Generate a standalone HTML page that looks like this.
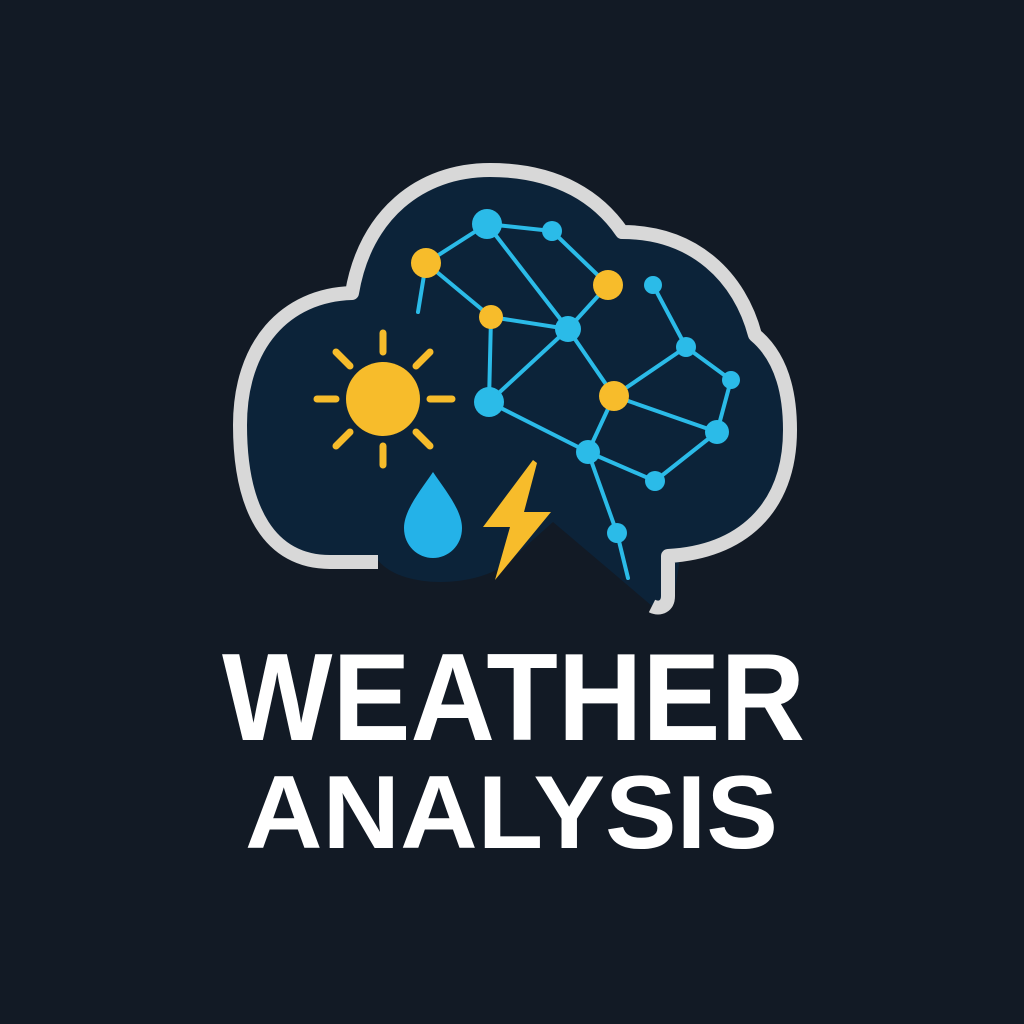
<!DOCTYPE html>
<html><head><meta charset="utf-8"><style>
html,body{margin:0;padding:0;background:#121a25;}
svg{display:block}
</style></head><body>
<svg width="1024" height="1024" viewBox="0 0 1024 1024" xmlns="http://www.w3.org/2000/svg">
<rect width="1024" height="1024" fill="#121a25"/>
<path d="M375,565 L330,565 C270,565 240,510 240,425 C240,345 285,295 352,293 C365,215 420,170 490,170 C560,170 600,200 622,232 C695,232 740,278 755,335 C785,360 790,400 790,430 C790,510 740,552 680,558 L674,598 C672,610 662,612 652,606 L553,522 L515,556 C485,590 400,590 378,560 Z" fill="#0c2339"/>
<path d="M378,562 L330,562 C270,562 240,510 240,425 C240,345 285,295 352,293 C365,215 420,170 490,170 C560,170 600,200 622,232 C695,232 740,278 755,335 C785,360 790,400 790,430 C790,510 740,552 668,556 L668,596 C668,606 660,610 652,606" fill="none" stroke="#d8d8d8" stroke-width="14" stroke-linejoin="round"/>
<g stroke="#2bbbe8" stroke-width="4" stroke-linecap="round" fill="none">
<path d="M487,224 L552,231 M487,224 L426,263 M487,224 L568,329 M552,231 L608,285 M608,285 L568,329 M426,263 L491,317 M426,263 L418,312 M491,317 L568,329 M491,317 L489,402 M489,402 L568,329 M489,402 L588,452 M568,329 L614,396 M614,396 L588,452 M614,396 L686,347 M614,396 L717,432 M653,285 L686,347 M686,347 L731,380 M731,380 L717,432 M717,432 L655,481 M655,481 L588,452 M588,452 L617,533 M617,533 L628,578"/>
</g>
<g fill="#2bbbe8">
<circle cx="487" cy="224" r="15"/><circle cx="552" cy="231" r="10"/><circle cx="653" cy="285" r="9"/>
<circle cx="568" cy="329" r="13"/><circle cx="686" cy="347" r="10"/><circle cx="731" cy="380" r="9"/>
<circle cx="489" cy="402" r="15"/><circle cx="717" cy="432" r="12"/><circle cx="588" cy="452" r="12"/>
<circle cx="655" cy="481" r="10"/><circle cx="617" cy="533" r="10"/>
</g>
<g fill="#f7bc2b">
<circle cx="426" cy="263" r="15"/><circle cx="608" cy="285" r="15"/><circle cx="491" cy="317" r="12"/><circle cx="614" cy="396" r="15"/>
</g>
<circle cx="383" cy="399" r="37" fill="#f7bc2b"/>
<g stroke="#f7bc2b" stroke-width="7" stroke-linecap="round">
<path d="M383,333 V352 M383,446 V465 M317,399 H336 M430,399 H452 M336,352 L350,366 M430,352 L416,366 M336,446 L350,432 M430,446 L416,432"/>
</g>
<path d="M433,472 C445,490 462,510 462,528 C462,546 448,558 433,558 C418,558 404,546 404,528 C404,510 421,490 433,472 Z" fill="#24b2e8"/>
<path d="M533,460 L483,527 L510,527 L495,580 L551,512 L524,512 L537,463 Z" fill="#f7bc2b"/>
<text x="222" y="740" textLength="583" lengthAdjust="spacingAndGlyphs" font-family="Liberation Sans, sans-serif" font-weight="bold" font-size="124" fill="#fff">WEATHER</text>
<text x="245" y="848" textLength="533" lengthAdjust="spacingAndGlyphs" font-family="Liberation Sans, sans-serif" font-weight="bold" font-size="104" fill="#fff">ANALYSIS</text>
</svg>
</body></html>
